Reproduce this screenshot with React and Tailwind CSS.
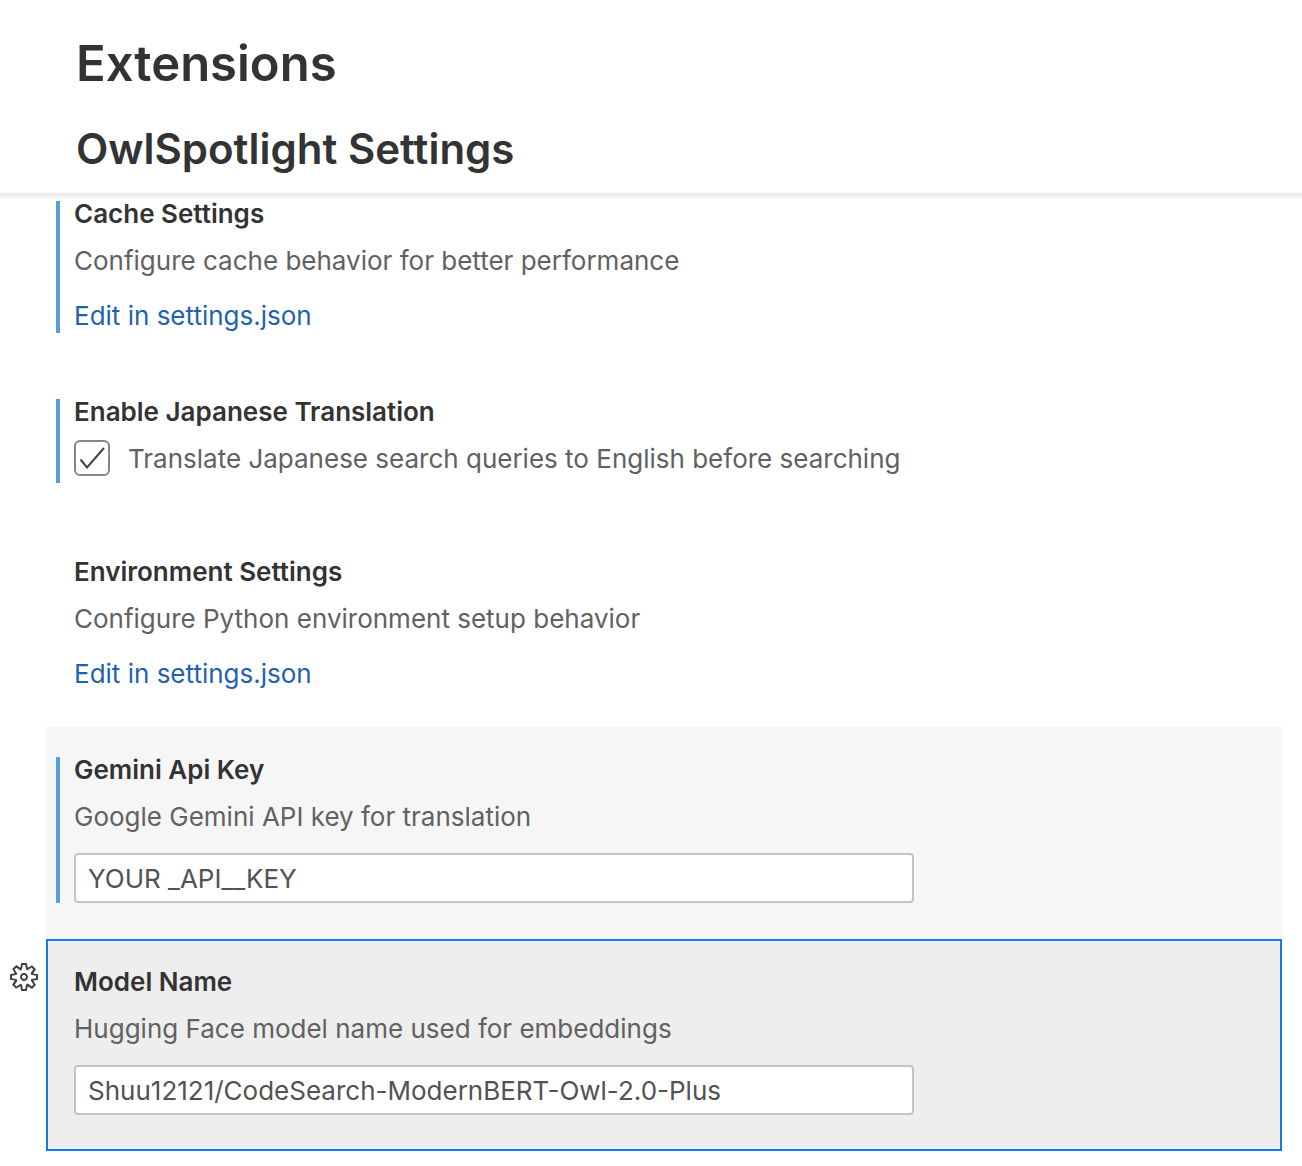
import React from "react";
import { VscGear } from "react-icons/vsc";

function Setting({ title, modified, state = "", space = "mt-7 mb-[34px]", gear = false, children }) {
  return (
    <div className="flex">
      <div className="flex w-[46px] shrink-0 justify-end pt-[22px] pr-1.5">
        {gear && (
          <button type="button" aria-label="More actions" className="h-8 w-8 text-[#424242]">
            <VscGear className="h-8 w-8" />
          </button>
        )}
      </div>
      <section className={`min-w-0 flex-1 border-2 px-2 ${state || "border-transparent"}`}>
        <div className={`${space} border-l-4 pl-[14px] ${modified ? "border-[#569fd8]" : "border-transparent"}`}>
          <h3 className="text-[26px] leading-[26px] font-semibold text-[#333333]">{title}</h3>
          {children}
        </div>
      </section>
    </div>
  );
}

function Description({ children }) {
  return <p className="mt-[18px] text-[26px] leading-8 text-[#616161]">{children}</p>;
}

function EditLink() {
  return (
    <p className="mt-[23px] pb-px text-[26px] leading-8">
      <a href="#settings-json" className="text-[#1f62b0]">Edit in settings.json</a>
    </p>
  );
}

function TextBox({ label, value }) {
  return (
    <input
      type="text"
      aria-label={label}
      defaultValue={value}
      className="mt-5 block h-[50px] w-full max-w-[840px] rounded-[4px] border-2 border-[#c4c4c4] bg-white px-3 text-[26px] text-[#525252] outline-none"
    />
  );
}

export default function App() {
  return (
    <main className="min-h-screen bg-white font-['Inter',sans-serif]">
      <header className="px-[76px] pt-8 pb-4 text-[#333333]">
        <h1 className="text-[49px] leading-16 font-semibold">Extensions</h1>
        <h2 className="mt-[25px] text-[42px] leading-14 font-semibold">OwlSpotlight Settings</h2>
      </header>
      <div className="h-1.5 bg-linear-to-b from-[#e9e9e9] to-[#f9f9f9]" />
      <div className="pr-5">
        <Setting title="Cache Settings" modified space="mb-[34px]">
          <Description>Configure cache behavior for better performance</Description>
          <EditLink />
        </Setting>
        <Setting title="Enable Japanese Translation" modified space="mt-7 mb-11">
          <label className="mt-[15px] flex items-end gap-[18px] pb-[7px]">
            <span className="grid h-9 w-9 shrink-0">
              <input
                type="checkbox"
                defaultChecked
                className="peer col-start-1 row-start-1 h-9 w-9 appearance-none rounded-[6px] border-2 border-[#868686] bg-white"
              />
              <svg viewBox="0 0 36 36" className="pointer-events-none invisible col-start-1 row-start-1 h-9 w-9 peer-checked:visible" fill="none" stroke="#424242" strokeWidth="2">
                <path d="M6.5 19.5 13 27.5 30 8" />
              </svg>
            </span>
            <span className="text-[26px] leading-[34px] text-[#616161]">Translate Japanese search queries to English before searching</span>
          </label>
        </Setting>
        <Setting title="Environment Settings">
          <Description>Configure Python environment setup behavior</Description>
          <EditLink />
        </Setting>
        <Setting title="Gemini Api Key" modified state="border-[#f6f6f6] bg-[#f6f6f6]">
          <Description>Google Gemini API key for translation</Description>
          <TextBox label="Gemini Api Key" value="YOUR _API__KEY" />
        </Setting>
        <Setting title="Model Name" gear state="border-[#127af0] bg-[#eeeeee]">
          <Description>Hugging Face model name used for embeddings</Description>
          <TextBox label="Model Name" value="Shuu12121/CodeSearch-ModernBERT-Owl-2.0-Plus" />
        </Setting>
      </div>
    </main>
  );
}
